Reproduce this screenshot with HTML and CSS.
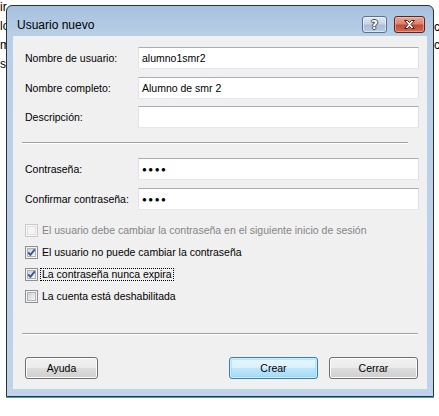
FILE: index.html
```html
<!DOCTYPE html>
<html lang="es">
<head>
<meta charset="utf-8">
<title>Usuario nuevo</title>
<link rel="stylesheet" href="styles.css">
</head>
<body>
<div class="desk">
  <div class="bg-left">
    <div>ir</div>
    <div>lo</div>
    <div>m</div>
    <div>s</div>
  </div>
  <div class="bg-right">
    <div>c</div>
    <div>c</div>
  </div>

  <div class="window">
    <div class="titlebar">
      <span class="title">Usuario nuevo</span>
      <div class="caps">
        <div class="cap help"><span>?</span></div>
        <div class="cap close">
          <svg width="15" height="11" viewBox="0 0 15 11">
            <path d="M2.5 1.5 H5.5 L7.5 3.6 L9.5 1.5 H12.5 L9 5.5 L12.5 9.5 H9.5 L7.5 7.4 L5.5 9.5 H2.5 L6 5.5 Z" fill="#fff" stroke="#4a1d16" stroke-width="1" stroke-linejoin="round"/>
          </svg>
        </div>
      </div>
    </div>

    <div class="client">
      <div class="row r1"><span class="lbl">Nombre de usuario:</span><div class="input">alumno1smr2</div></div>
      <div class="row r2"><span class="lbl">Nombre completo:</span><div class="input">Alumno de smr 2</div></div>
      <div class="row r3"><span class="lbl">Descripción:</span><div class="input"></div></div>

      <div class="sep sep-top"></div>

      <div class="row r4"><span class="lbl">Contraseña:</span><div class="input"><span class="dots">●●●●</span></div></div>
      <div class="row r5"><span class="lbl">Confirmar contraseña:</span><div class="input"><span class="dots">●●●●</span></div></div>

      <div class="checks">
        <div class="chk disabled"><span class="cb"></span><span class="ctext">El usuario debe cambiar la contraseña en el siguiente inicio de sesión</span></div>
        <div class="chk"><span class="cb"><svg class="tick" width="13" height="13" viewBox="0 0 13 13"><path d="M3.2 6.4 L5.4 8.8 L9.8 3.4" fill="none" stroke="#3b5695" stroke-width="1.9"/></svg></span><span class="ctext">El usuario no puede cambiar la contraseña</span></div>
        <div class="chk"><span class="cb"><svg class="tick" width="13" height="13" viewBox="0 0 13 13"><path d="M3.2 6.4 L5.4 8.8 L9.8 3.4" fill="none" stroke="#3b5695" stroke-width="1.9"/></svg></span><span class="ctext focus">La contraseña nunca expira</span></div>
        <div class="chk"><span class="cb"></span><span class="ctext">La cuenta está deshabilitada</span></div>
      </div>

      <div class="sep sep-bottom"></div>

      <div class="buttons">
        <button class="btn help-btn">Ayuda</button>
        <div class="btn-group">
          <button class="btn default">Crear</button>
          <button class="btn">Cerrar</button>
        </div>
      </div>
    </div>
  </div>
</div>
</body>
</html>
```

FILE: styles.css
```css
html, body {
  margin: 0;
  padding: 0;
  background: #ffffff;
}

body {
  width: 439px;
  height: 416px;
  overflow: hidden;
  font-family: "Liberation Sans", Arial, sans-serif;
}

.desk {
  position: relative;
  width: 439px;
  height: 416px;
  display: flex;
  justify-content: space-between;
  font-size: 12px;
  color: #000;
}

.bg-left {
  margin-top: -2px;
  line-height: 19px;
}

.bg-right {
  width: 5px;
  padding-top: 18px;
  line-height: 18px;
  overflow: hidden;
}

/* window */
.window {
  position: absolute;
  left: 6px;
  top: 5px;
  width: 426px;
  height: 390px;
  border: 1px solid #2d3136;
  border-radius: 6px 6px 0 0;
  background: linear-gradient(#a7c0dd 0px, #b9cfe8 30px, #bfd4eb 100%);
  box-shadow: 0 1px 0 #3aa3d6;
  display: flex;
  flex-direction: column;
}

.titlebar {
  height: 30px;
  flex: none;
  display: flex;
  justify-content: space-between;
  align-items: flex-start;
  padding: 0 8px 0 10px;
}

.title {
  font-size: 12px;
  line-height: 14px;
  margin-top: 12px;
  color: #000;
}

.caps {
  display: flex;
  gap: 7px;
  margin-top: 10px;
}

.cap {
  height: 15px;
  border: 1px solid #5c718e;
  border-radius: 3px;
  display: flex;
  align-items: center;
  justify-content: center;
}

.cap.help {
  width: 23px;
  background: linear-gradient(#e1e9f3 0%, #c7d5e7 45%, #a9bdd8 55%, #b9cce4 100%);
  box-shadow: inset 0 0 0 1px rgba(255,255,255,0.5);
}

.cap.help span {
  font-family: "DejaVu Sans", sans-serif;
  font-weight: bold;
  font-size: 12px;
  line-height: 12px;
  color: #ffffff;
  text-shadow: -1px 0 #3f4d61, 1px 0 #3f4d61, 0 -1px #3f4d61, 0 1px #3f4d61;
}

.cap.close {
  width: 29px;
  border-color: #5e231b;
  background: linear-gradient(#e9a898 0%, #d9826e 45%, #c44b36 55%, #cf6a52 100%);
  box-shadow: inset 0 0 0 1px rgba(255,220,210,0.45);
}

/* client */
.client {
  flex: 1;
  margin: 0 6px 7px 6px;
  background: #f0f0f0;
  display: flex;
  flex-direction: column;
  padding: 11px 8px 0 12px;
  font-size: 10.5px;
}

.row {
  display: flex;
  align-items: center;
  height: 22px;
}

.r2, .r5 { margin-top: 8px; }
.r3 { margin-top: 7px; }
.r4 { margin-top: 14px; }

.lbl {
  width: 113px;
  flex: none;
  color: #000;
}

.input {
  flex: 1;
  height: 20px;
  box-sizing: border-box;
  height: 22px;
  border: 1px solid;
  border-color: #abadb3 #dbdfe6 #e3e9ef #e2e3ea;
  background: #ffffff;
  padding-left: 3px;
  display: flex;
  align-items: center;
  color: #000;
}

.dots {
  font-size: 8px;
  letter-spacing: 1.5px;
  margin-top: 1px;
}

.sep {
  height: 1px;
  background: #a0a0a0;
  border-bottom: 1px solid #ffffff;
  margin-left: -3px;
}

.sep-top {
  margin-top: 14px;
  width: 386px;
}

.sep-bottom {
  margin-top: 26px;
  width: 396px;
}

.checks {
  margin-top: 9px;
  display: flex;
  flex-direction: column;
}

.chk {
  height: 22px;
  display: flex;
  align-items: center;
}

.cb {
  width: 13px;
  height: 13px;
  box-sizing: border-box;
  border: 1px solid #8e8f8f;
  background: #f4f4f4;
  position: relative;
  flex: none;
}

.cb::before {
  content: "";
  position: absolute;
  left: 1px;
  top: 1px;
  right: 1px;
  bottom: 1px;
  border: 1px solid #aeb3b9;
  background: linear-gradient(135deg, #cdd1d6, #f7f7f7);
}

.cb .tick {
  position: absolute;
  left: -1px;
  top: -1px;
  z-index: 1;
}

.chk.disabled .cb {
  border-color: #c9c9c9;
  background: #f7f7f7;
}

.chk.disabled .cb::before {
  border-color: #e1e1e1;
  background: #f4f4f4;
}

.ctext {
  margin-left: 2px;
  padding: 0 1px;
  line-height: 11px;
  border: 1px solid transparent;
  color: #000;
}

.chk.disabled .ctext {
  color: #858585;
}

.ctext.focus {
  border: 1px dotted #000;
}

.buttons {
  margin-top: 22px;
  display: flex;
  justify-content: space-between;
  padding-right: 1px;
}

.btn-group {
  display: flex;
  gap: 11px;
}

.btn {
  height: 22px;
  width: 89px;
  box-sizing: border-box;
  border: 1px solid #707070;
  border-radius: 3px;
  background: linear-gradient(#f2f2f2 0%, #ebebeb 50%, #dddddd 50%, #cfcfcf 100%);
  box-shadow: inset 0 0 0 1px #fcfcfc;
  font-family: "Liberation Sans", Arial, sans-serif;
  font-size: 10.5px;
  color: #000;
  padding: 0;
  margin: 0;
}

.btn.help-btn {
  width: 73px;
}

.btn.default {
  border-color: #3c7fb1;
  background: linear-gradient(#eaf6fd 0%, #d9f0fc 50%, #bee6fd 50%, #a7d9f5 100%);
  box-shadow: inset 0 0 0 1px #c5f2ff, inset 0 0 0 2px rgba(140,215,245,0.5);
}
```
